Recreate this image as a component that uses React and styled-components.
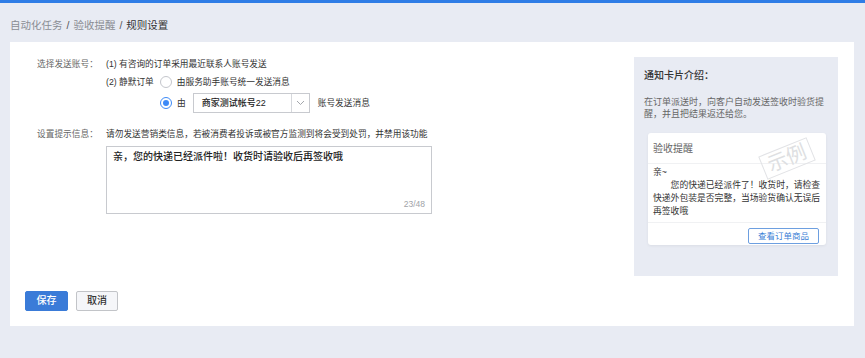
import React from 'react';
import styled, { createGlobalStyle } from 'styled-components';

const GlobalStyle = createGlobalStyle`
  html, body {
    margin: 0;
    padding: 0;
    background: #e8ebf3;
    font-family: "Liberation Sans", "Noto Sans CJK SC", sans-serif;
  }
`;

const Page = styled.div`
  width: 865px;
  height: 358px;
  background: #e8ebf3;
  overflow: hidden;
`;

const TopBar = styled.div`
  height: 3px;
  background: #2f7de6;
`;

const Breadcrumb = styled.div`
  height: 39px;
  box-sizing: border-box;
  padding: 15px 10px 0;
  font-size: 10.5px;
  line-height: 14px;
  color: #8a8d94;
`;

const Crumb = styled.span`
  color: ${(p) => (p.$current ? '#333' : '#8a8d94')};
`;

const Sep = styled.span`
  color: #555;
  margin: 0 4px;
`;

const Panel = styled.div`
  margin-left: 10px;
  width: 844px;
  height: 284px;
  box-sizing: border-box;
  background: #fff;
  padding: 15px 16px 15px 15px;
  display: flex;
  flex-direction: column;
`;

const Body = styled.div`
  display: flex;
  justify-content: space-between;
  height: 219px;
`;

const Form = styled.div`
  padding-left: 12px;
  display: flex;
  flex-direction: column;
  font-size: 8.7px;
  color: #333;
`;

const Row = styled.div`
  display: flex;
  align-items: center;
  min-height: 14px;
  line-height: 14px;
  margin-top: ${(p) => p.$top || 0}px;
`;

const Label = styled.div`
  width: 69px;
  flex: none;
  color: #666;
`;

const Indent = styled.div`
  width: ${(p) => p.$w}px;
  flex: none;
`;

const Text = styled.span`
  margin-right: ${(p) => p.$mr || 0}px;
`;

const Radio = styled.span`
  width: 12px;
  height: 12px;
  box-sizing: border-box;
  border-radius: 50%;
  border: 1px solid ${(p) => (p.$checked ? '#3d8af7' : '#c4c6cc')};
  background: #fff;
  display: inline-flex;
  align-items: center;
  justify-content: center;
  margin-right: 5px;
  flex: none;

  &::after {
    content: '';
    width: 6px;
    height: 6px;
    border-radius: 50%;
    background: ${(p) => (p.$checked ? '#3d8af7' : 'transparent')};
  }
`;

const Select = styled.div`
  width: 117px;
  height: 20px;
  box-sizing: border-box;
  border: 1px solid #c8cacf;
  display: flex;
  margin: 0 8px 0 7px;
`;

const SelectValue = styled.div`
  flex: 1;
  padding-left: 8px;
  font-size: 9px;
  line-height: 18px;
  color: #222;
  font-weight: 500;
`;

const SelectArrow = styled.div`
  width: 17px;
  border-left: 1px solid #d6d8dc;
  display: flex;
  align-items: center;
  justify-content: center;
`;

const TextArea = styled.div`
  margin: 5px 0 0 69px;
  width: 326px;
  height: 68px;
  box-sizing: border-box;
  border: 1px solid #c8cacf;
  padding: 3px 6px;
  position: relative;
  font-size: 10px;
  line-height: 14px;
  color: #222;
  font-weight: 500;
`;

const Counter = styled.span`
  position: absolute;
  right: 6px;
  bottom: 2px;
  font-size: 8.5px;
  color: #a0a3a8;
  font-weight: 400;
`;

const Aside = styled.div`
  width: 204px;
  box-sizing: border-box;
  background: #e8ebf3;
  padding: 12px 12px 0 10px;
`;

const AsideTitle = styled.div`
  font-size: 10px;
  line-height: 14px;
  font-weight: 500;
  color: #333;
`;

const AsideDesc = styled.p`
  margin: 13px 0 0;
  width: 182px;
  font-size: 9px;
  line-height: 12px;
  color: #666;
`;

const Card = styled.div`
  margin: 13px 0 0 4px;
  width: 178px;
  height: 112px;
  box-sizing: border-box;
  background: #fff;
  border-radius: 3px;
  box-shadow: 0 1px 3px rgba(0, 0, 0, 0.06);
  position: relative;
  overflow: hidden;
`;

const CardHead = styled.div`
  height: 31px;
  box-sizing: border-box;
  padding: 9px 5px 0;
  font-size: 10px;
  line-height: 14px;
  color: #666;
  border-bottom: 1px solid #f0f1f3;
`;

const CardBody = styled.div`
  padding: 2px 5px 1px;
  height: 55px;
  font-size: 8.8px;
  line-height: 13px;
  color: #333;
  border-bottom: 1px solid #f0f1f3;
`;

const Para = styled.p`
  margin: 0;
  width: 168px;
  text-indent: 2em;
`;

const CardFoot = styled.div`
  display: flex;
  justify-content: flex-end;
  padding: 5px 7px 0;
`;

const LinkButton = styled.div`
  width: 71px;
  height: 16px;
  box-sizing: border-box;
  border: 1px solid #6d9fe0;
  border-radius: 2px;
  font-size: 8.5px;
  line-height: 14px;
  text-align: center;
  color: #3c7fd6;
`;

const Stamp = styled.div`
  position: absolute;
  left: 113px;
  top: 13px;
  padding: 0 5px;
  border: 1px solid #e2e3e6;
  font-size: 20px;
  line-height: 23px;
  color: #dedfe2;
  transform: rotate(-22deg);
`;

const Footer = styled.div`
  display: flex;
  gap: 8px;
  margin-top: 15px;
`;

const Button = styled.div`
  width: ${(p) => (p.$primary ? 43 : 42)}px;
  height: 20px;
  box-sizing: border-box;
  border-radius: 2px;
  border: 1px solid ${(p) => (p.$primary ? '#3a7bd8' : '#c2c4c8')};
  background: ${(p) => (p.$primary ? '#3a7bd8' : '#f5f6f9')};
  color: ${(p) => (p.$primary ? '#fff' : '#333')};
  font-size: 10px;
  font-weight: 500;
  line-height: 18px;
  text-align: center;
`;

function Chevron() {
  return (
    <svg width="9" height="6" viewBox="0 0 9 6">
      <path d="M1 1l3.5 3.5L8 1" fill="none" stroke="#9a9da3" strokeWidth="0.9" />
    </svg>
  );
}

export default function App() {
  return (
    <Page>
      <GlobalStyle />
      <TopBar />
      <Breadcrumb>
        <Crumb>自动化任务</Crumb>
        <Sep>/</Sep>
        <Crumb>验收提醒</Crumb>
        <Sep>/</Sep>
        <Crumb $current>规则设置</Crumb>
      </Breadcrumb>
      <Panel>
        <Body>
          <Form>
            <Row>
              <Label>选择发送账号：</Label>
              <Text>(1) 有咨询的订单采用最近联系人账号发送</Text>
            </Row>
            <Row $top={4}>
              <Indent $w={69} />
              <Text $mr={6}>(2) 静默订单</Text>
              <Radio />
              <Text>由服务助手账号统一发送消息</Text>
            </Row>
            <Row $top={4}>
              <Indent $w={123} />
              <Radio $checked />
              <Text>由</Text>
              <Select>
                <SelectValue>商家测试帐号22</SelectValue>
                <SelectArrow>
                  <Chevron />
                </SelectArrow>
              </Select>
              <Text>账号发送消息</Text>
            </Row>
            <Row $top={14}>
              <Label>设置提示信息：</Label>
              <Text>请勿发送营销类信息，若被消费者投诉或被官方监测到将会受到处罚，并禁用该功能</Text>
            </Row>
            <TextArea>
              亲，您的快递已经派件啦！收货时请验收后再签收哦
              <Counter>23/48</Counter>
            </TextArea>
          </Form>
          <Aside>
            <AsideTitle>通知卡片介绍：</AsideTitle>
            <AsideDesc>
              在订单派送时，向客户自动发送签收时验货提
              <br />
              醒，并且把结果返还给您。
            </AsideDesc>
            <Card>
              <CardHead>验收提醒</CardHead>
              <Stamp>示例</Stamp>
              <CardBody>
                <div>亲~</div>
                <Para>您的快递已经派件了！收货时，请检查快递外包装是否完整，当场验货确认无误后再签收哦</Para>
              </CardBody>
              <CardFoot>
                <LinkButton>查看订单商品</LinkButton>
              </CardFoot>
            </Card>
          </Aside>
        </Body>
        <Footer>
          <Button $primary>保存</Button>
          <Button>取消</Button>
        </Footer>
      </Panel>
    </Page>
  );
}
